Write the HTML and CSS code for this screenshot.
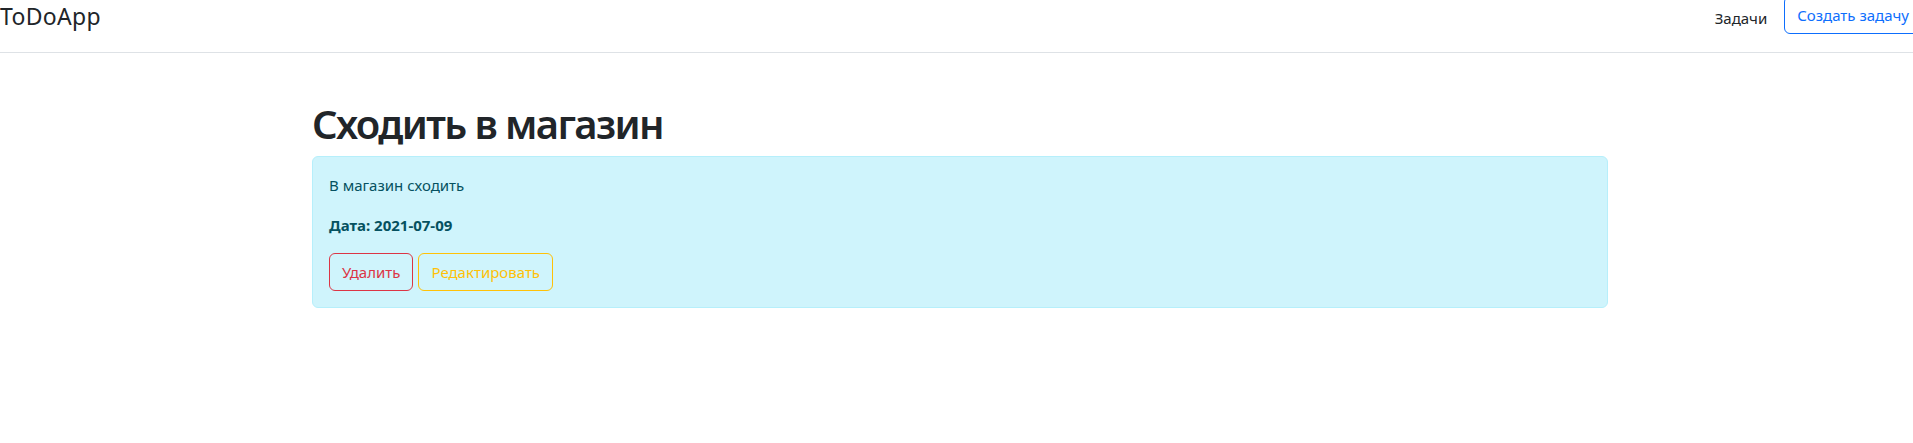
FILE: index.html
```html
<!DOCTYPE html>
<html lang="ru">
<head>
<meta charset="utf-8">
<title>ToDoApp</title>
<link rel="stylesheet" href="styles.css">
</head>
<body>
<header class="navbar">
  <a class="brand" href="#">ToDoApp</a>
  <nav class="nav-right">
    <a class="nav-link" href="#">Задачи</a>
    <a class="btn btn-outline-primary" href="#">Создать задачу</a>
  </nav>
</header>
<main class="container">
  <h1 class="title">Сходить в магазин</h1>
  <div class="alert">
    <p class="desc">В магазин сходить</p>
    <p class="date">Дата: 2021-07-09</p>
    <div class="actions">
      <a class="btn btn-outline-danger" href="#">Удалить</a>
      <a class="btn btn-outline-warning" href="#">Редактировать</a>
    </div>
  </div>
</main>
</body>
</html>
```
FILE: styles.css
```css
* { box-sizing: border-box; }
html, body { margin: 0; padding: 0; overflow: hidden; }
body {
  font-family: "Noto Sans", "Open Sans", sans-serif;
  font-size: 16px;
  line-height: 24px;
  color: #212529;
  background: #fff;
}
a { text-decoration: none; }

.navbar {
  display: flex;
  align-items: flex-start;
  justify-content: space-between;
  height: 53px;
  border-bottom: 1px solid #dee2e6;
}
.brand {
  font-size: 23px;
  line-height: 30px;
  padding-top: 1px;
  color: #212529;
  letter-spacing: 0.3px;
}
.nav-right {
  display: flex;
  align-items: flex-start;
  gap: 9px;
  margin-right: -9px;
}
.nav-link {
  color: #212529;
  padding: 6px 8px 0;
  font-size: 15px;
}
.btn {
  display: inline-block;
  height: 38px;
  padding: 6px 12px;
  border: 1px solid transparent;
  border-radius: 6px;
  font-size: 15px;
  line-height: 24px;
}
.nav-right .btn { margin-top: -4px; }
.btn-outline-primary { color: #0d6efd; border-color: #0d6efd; }
.btn-outline-danger { color: #dc3545; border-color: #dc3545; }
.btn-outline-warning { color: #ffc107; border-color: #ffc107; }

.container {
  width: 1296px;
  margin: 47px 0 0 312px;
}
.title {
  margin: 0 0 8px;
  font-size: 40px;
  line-height: 48px;
  font-weight: 600;
  letter-spacing: -1.6px;
}
.alert {
  background: #cff4fc;
  border: 1px solid #b6effb;
  border-radius: 6px;
  color: #055160;
  padding: 16px;
}
.alert p { margin: 0 0 16px; font-size: 15px; }
.date { font-weight: 700; }
.actions { display: flex; gap: 5px; }
```
